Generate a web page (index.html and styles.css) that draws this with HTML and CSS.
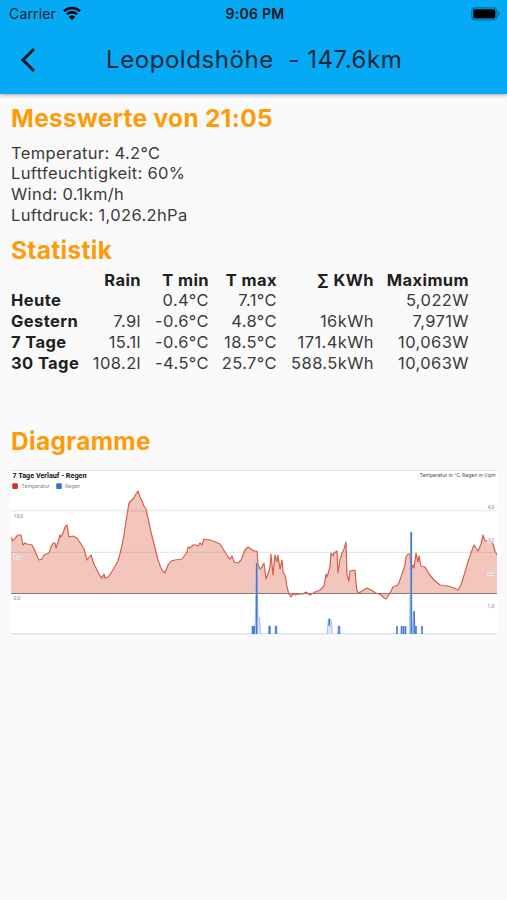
FILE: index.html
```html
<!DOCTYPE html>
<html lang="de">
<head>
    <meta charset="UTF-8">
    <meta name="viewport" content="width=device-width, initial-scale=1.0">
    <title>Leopoldshöhe</title>
    <link rel="stylesheet" href="styles.css">
</head>
<body>
    <header class="app-bar">
        <div class="status-bar">
            <div class="carrier">
                <span class="carrier-name">Carrier</span>
                <svg class="wifi" width="20" height="15" viewBox="0 0 20 15">
                    <path d="M2 5.2a11.5 11.5 0 0 1 16 0M4.900 8.300a7.300 7.300 0 0 1 10.200 0" fill="none" stroke="#000" stroke-width="2.5"/>
                    <path d="M10 14 6.700 10.700a4.800 4.800 0 0 1 6.600 0z"/>
                </svg>
            </div>
            <span class="clock">9:06 PM</span>
            <svg class="battery" width="30" height="14" viewBox="0 0 30 14">
                <rect x=".8" y=".8" width="25" height="12.2" rx="3.5" fill="none" stroke="#036b9f" stroke-width="1.2"/>
                <rect x="2.2" y="2.3" width="22.2" height="9.2" rx="2"/>
                <path d="M27 4.5c2 .8 2 4 0 4.8z" fill="#036b9f"/>
            </svg>
        </div>
        <div class="toolbar">
            <svg class="back" width="18" height="26" viewBox="0 0 18 26">
                <path d="M15 2 4 13l11 11" fill="none" stroke="#0b1a22" stroke-width="3"/>
            </svg>
            <h1 class="title">Leopoldshöhe&nbsp; - 147.6km</h1>
        </div>
    </header>

    <main class="content">
        <h2 class="heading">Messwerte von 21:05</h2>
        <div class="values">
            <p>Temperatur: 4.2°C</p>
            <p>Luftfeuchtigkeit: 60%</p>
            <p>Wind: 0.1km/h</p>
            <p>Luftdruck: 1,026.2hPa</p>
        </div>

        <h2 class="heading heading-stats">Statistik</h2>
        <table class="stats">
            <colgroup>
                <col class="col-name"><col class="col-rain"><col class="col-min"><col class="col-max"><col class="col-sum"><col class="col-peak">
            </colgroup>
            <tr><th></th><th>Rain</th><th>T min</th><th>T max</th><th>∑ KWh</th><th>Maximum</th></tr>
            <tr><th>Heute</th><td></td><td>0.4°C</td><td>7.1°C</td><td></td><td>5,022W</td></tr>
            <tr><th>Gestern</th><td>7.9l</td><td>-0.6°C</td><td>4.8°C</td><td>16kWh</td><td>7,971W</td></tr>
            <tr><th>7 Tage</th><td>15.1l</td><td>-0.6°C</td><td>18.5°C</td><td>171.4kWh</td><td>10,063W</td></tr>
            <tr><th>30 Tage</th><td>108.2l</td><td>-4.5°C</td><td>25.7°C</td><td>588.5kWh</td><td>10,063W</td></tr>
        </table>

        <h2 class="heading heading-charts">Diagramme</h2>
        <svg class="chart" width="486" height="165" viewBox="11 470 486 165">
            <rect x="11" y="470" width="486" height="165" fill="#fff"/>
            <path class="grid" d="M11 470.5h486M11 510.8h486M11 552.3h486"/>
            <polygon class="temp-area" points="11,593.5 11,537 13,541 16,537 18,535 21,535 23,545 25,543 27,544 32,545 35,551 38,558 39,560 42,559 44,555 49,553 51,547 53,543 55,543 56,548 58,542 60,535 61,537 63,533 65,527 67,525 69,537 73,536 77,538 81,544 84,549 87,560 91,555 94,564 97,570 100,576 102,578 104,574 105,578 108,577 111,573 114,568 118,561 120,554 122,545 124,535 125,528 127,515 129,503 133,499 136,494 138,491 140,497 142,501 144,506 146,509 148,518 150,528 153,540 156,552 158,560 161,568 163,571 165,573 168,565 171,561 175,560 182,559 185,555 187,552 188,547 190,548 193,545 196,545 198,546 200,543 202,545 204,539 210,540 213,541 220,544 225,552 228,557 230,559 232,556 234,562 238,563 241,560 243,555 245,550 248,547 251,549 254,551 257,551 258,564 260,569 262,567 264,563 266,579 269,571 270,567 271,554 273,575 275,555 277,562 278,555 280,569 282,560 283,572 285,575 287,587 289,594 291,597 293,594 295,595 299,594 303,594 306,592 310,595 315,592 320,590 324,586 326,574 327,577 330,567 331,553 333,556 334,553 337,551 338,573 340,560 342,553 344,549 346,542 347,575 349,581 350,571 355,570 356,583 357,591 359,593 362,591 367,588 371,590 376,593 381,595 384,598 386,599 389,595 393,587 398,585 401,577 405,565 406,557 408,554 410,554 411,570 413,565 414,568 416,553 418,562 419,556 421,566 425,567 429,574 434,580 440,585 448,586 454,588 458,590 461,585 465,572 468,562 471,553 474,545 476,548 478,551 481,544 483,535 485,541 490,540 493,544 495,551 497,555 497,593.5"/>
            <path class="zero" d="M11 593.5h486"/>
            <polyline class="temp-line" points="11,537 13,541 16,537 18,535 21,535 23,545 25,543 27,544 32,545 35,551 38,558 39,560 42,559 44,555 49,553 51,547 53,543 55,543 56,548 58,542 60,535 61,537 63,533 65,527 67,525 69,537 73,536 77,538 81,544 84,549 87,560 91,555 94,564 97,570 100,576 102,578 104,574 105,578 108,577 111,573 114,568 118,561 120,554 122,545 124,535 125,528 127,515 129,503 133,499 136,494 138,491 140,497 142,501 144,506 146,509 148,518 150,528 153,540 156,552 158,560 161,568 163,571 165,573 168,565 171,561 175,560 182,559 185,555 187,552 188,547 190,548 193,545 196,545 198,546 200,543 202,545 204,539 210,540 213,541 220,544 225,552 228,557 230,559 232,556 234,562 238,563 241,560 243,555 245,550 248,547 251,549 254,551 257,551 258,564 260,569 262,567 264,563 266,579 269,571 270,567 271,554 273,575 275,555 277,562 278,555 280,569 282,560 283,572 285,575 287,587 289,594 291,597 293,594 295,595 299,594 303,594 306,592 310,595 315,592 320,590 324,586 326,574 327,577 330,567 331,553 333,556 334,553 337,551 338,573 340,560 342,553 344,549 346,542 347,575 349,581 350,571 355,570 356,583 357,591 359,593 362,591 367,588 371,590 376,593 381,595 384,598 386,599 389,595 393,587 398,585 401,577 405,565 406,557 408,554 410,554 411,570 413,565 414,568 416,553 418,562 419,556 421,566 425,567 429,574 434,580 440,585 448,586 454,588 458,590 461,585 465,572 468,562 471,553 474,545 476,548 478,551 481,544 483,535 485,541 490,540 493,544 495,551 497,555"/>
            <path class="rain-base" d="M11 633.7h486"/>
            <path class="rain-soft" d="M255 634l1.500-71 1.500 55h1.500l1 16M327 634l1.500-15h2l1.500 7v8M268.500 634v-8h2v8M275 634v-8h2v8M338 634v-8h2v8M409.500 634l1.500-102 1 102M412 634l2-23 1.500 23"/>
            <path class="rain" d="M252.500 634v-8M254.200 634v-8M256.700 634v-71M269.500 634v-8M276 634v-8M329.300 626v-7M339 634v-8M397 634v-8M401.500 634v-8M403.500 634v-8M405.500 634v-8M411.300 634V532M414.200 634v-23M416 634v-8M422 634v-8"/>
            <text class="chart-title" x="12.5" y="478.300" textLength="74" lengthAdjust="spacingAndGlyphs">7 Tage Verlauf - Regen</text>
            <rect x="12.3" y="483.3" width="5.6" height="5.6" rx="1" fill="#c5371f"/>
            <text class="label" x="21.5" y="488.3" textLength="28" lengthAdjust="spacingAndGlyphs">Temperatur</text>
            <rect x="56.2" y="483.3" width="5.6" height="5.6" rx="1" fill="#3872d3"/>
            <text class="label" x="65" y="488.3" textLength="15" lengthAdjust="spacingAndGlyphs">Regen</text>
            <text class="label label-unit" x="419.5" y="477.2" textLength="76" lengthAdjust="spacingAndGlyphs">Temperatur in °C, Regen in l/qm</text>
            <text class="label" x="13.5" y="517.5">10,0</text>
            <text class="label label-on" x="13.5" y="558.5">5,0</text>
            <text class="label" x="13.5" y="599.5">0,0</text>
            <text class="label" x="487.5" y="509">4,0</text>
            <text class="label label-on" x="487.5" y="541.8">3,0</text>
            <text class="label label-on" x="487.5" y="575">2,0</text>
            <text class="label" x="487.5" y="607.5">1,0</text>
        </svg>
    </main>
</body>
</html>
```

FILE: styles.css
```css
:root {
    --bar-color: #05a9f4;
    --accent: #ff9a08;
    --text: #3a3a3a;
    --text-strong: #202020;
}

* {
    box-sizing: border-box;
}

body {
    margin: 0;
    min-height: 100vh;
    background-color: #fafafa;
    color: var(--text);
    font-family: Inter, "Liberation Sans", sans-serif;
}

h1, h2, p {
    margin: 0;
}

.app-bar {
    height: 94px;
    background-color: var(--bar-color);
    box-shadow: 0 1px 4px rgba(0, 0, 0, 0.35);
}

.status-bar {
    display: grid;
    grid-template-columns: 1fr auto 1fr;
    align-items: center;
    height: 26px;
    padding: 1px 6px 0 9px;
    color: #06222f;
    font-size: 14px;
}

.carrier {
    display: flex;
    align-items: center;
    gap: 6px;
}

.carrier-name {
    letter-spacing: 0.15px;
}

.clock {
    color: #04151d;
    font-weight: 600;
    letter-spacing: 0.3px;
}

.battery {
    justify-self: end;
}

.toolbar {
    display: flex;
    align-items: center;
    height: 67px;
    padding-left: 19px;
}

.title {
    margin-left: 69px;
    color: #0a2836;
    font-size: 24px;
    font-weight: 400;
    letter-spacing: 0.56px;
    white-space: nowrap;
}

.content {
    padding: 9px 10px 0 11px;
}

.heading {
    color: var(--accent);
    font-size: 24.5px;
    font-weight: 700;
    letter-spacing: 0.3px;
    line-height: 30px;
}

.values {
    margin-top: 9.5px;
    font-size: 16.5px;
    letter-spacing: 0.34px;
    line-height: 20.8px;
}

.heading-stats {
    margin-top: 9.5px;
}

.stats {
    width: 458px;
    margin-top: 4.5px;
    table-layout: fixed;
    border-collapse: collapse;
    font-size: 16.5px;
    letter-spacing: 0.4px;
    line-height: 20.8px;
    text-align: right;
    white-space: nowrap;
}

.stats th,
.stats td {
    height: 20.8px;
    padding: 0;
}

.stats th {
    color: var(--text-strong);
    font-weight: 700;
}

.stats th:first-child {
    text-align: left;
}

.col-name { width: 68px; }
.col-rain { width: 62px; }
.col-min { width: 68px; }
.col-max { width: 68px; }
.col-sum { width: 97px; }
.col-peak { width: 95px; }

.heading-charts {
    margin-top: 52.5px;
}

.chart {
    display: block;
    margin-top: 14px;
}

.grid {
    fill: none;
    stroke: #e2e2e2;
}

.temp-area {
    fill: #dc5b43;
    fill-opacity: 0.35;
}

.temp-line {
    fill: none;
    stroke: #d4604b;
    stroke-width: 1.2;
    stroke-linejoin: round;
}

.zero {
    stroke: #8f7771;
}

.rain {
    fill: none;
    stroke: #447ad4;
    stroke-width: 1.6;
}

.rain-soft {
    fill: #dbe6f8;
    stroke: #8fb0e6;
    stroke-width: 0.8;
}

.rain-base {
    stroke: #d9e2f5;
    stroke-width: 1.4;
}

.chart-title {
    fill: #111;
    font-family: Roboto, sans-serif;
    font-size: 6.8px;
    font-weight: 700;
}

.label {
    fill: #888;
    font-family: Roboto, sans-serif;
    font-size: 5.2px;
}

.label-unit {
    fill: #555;
}

.label-on {
    fill: #999;
    stroke: #fff;
    stroke-width: 1;
    paint-order: stroke;
}
```
